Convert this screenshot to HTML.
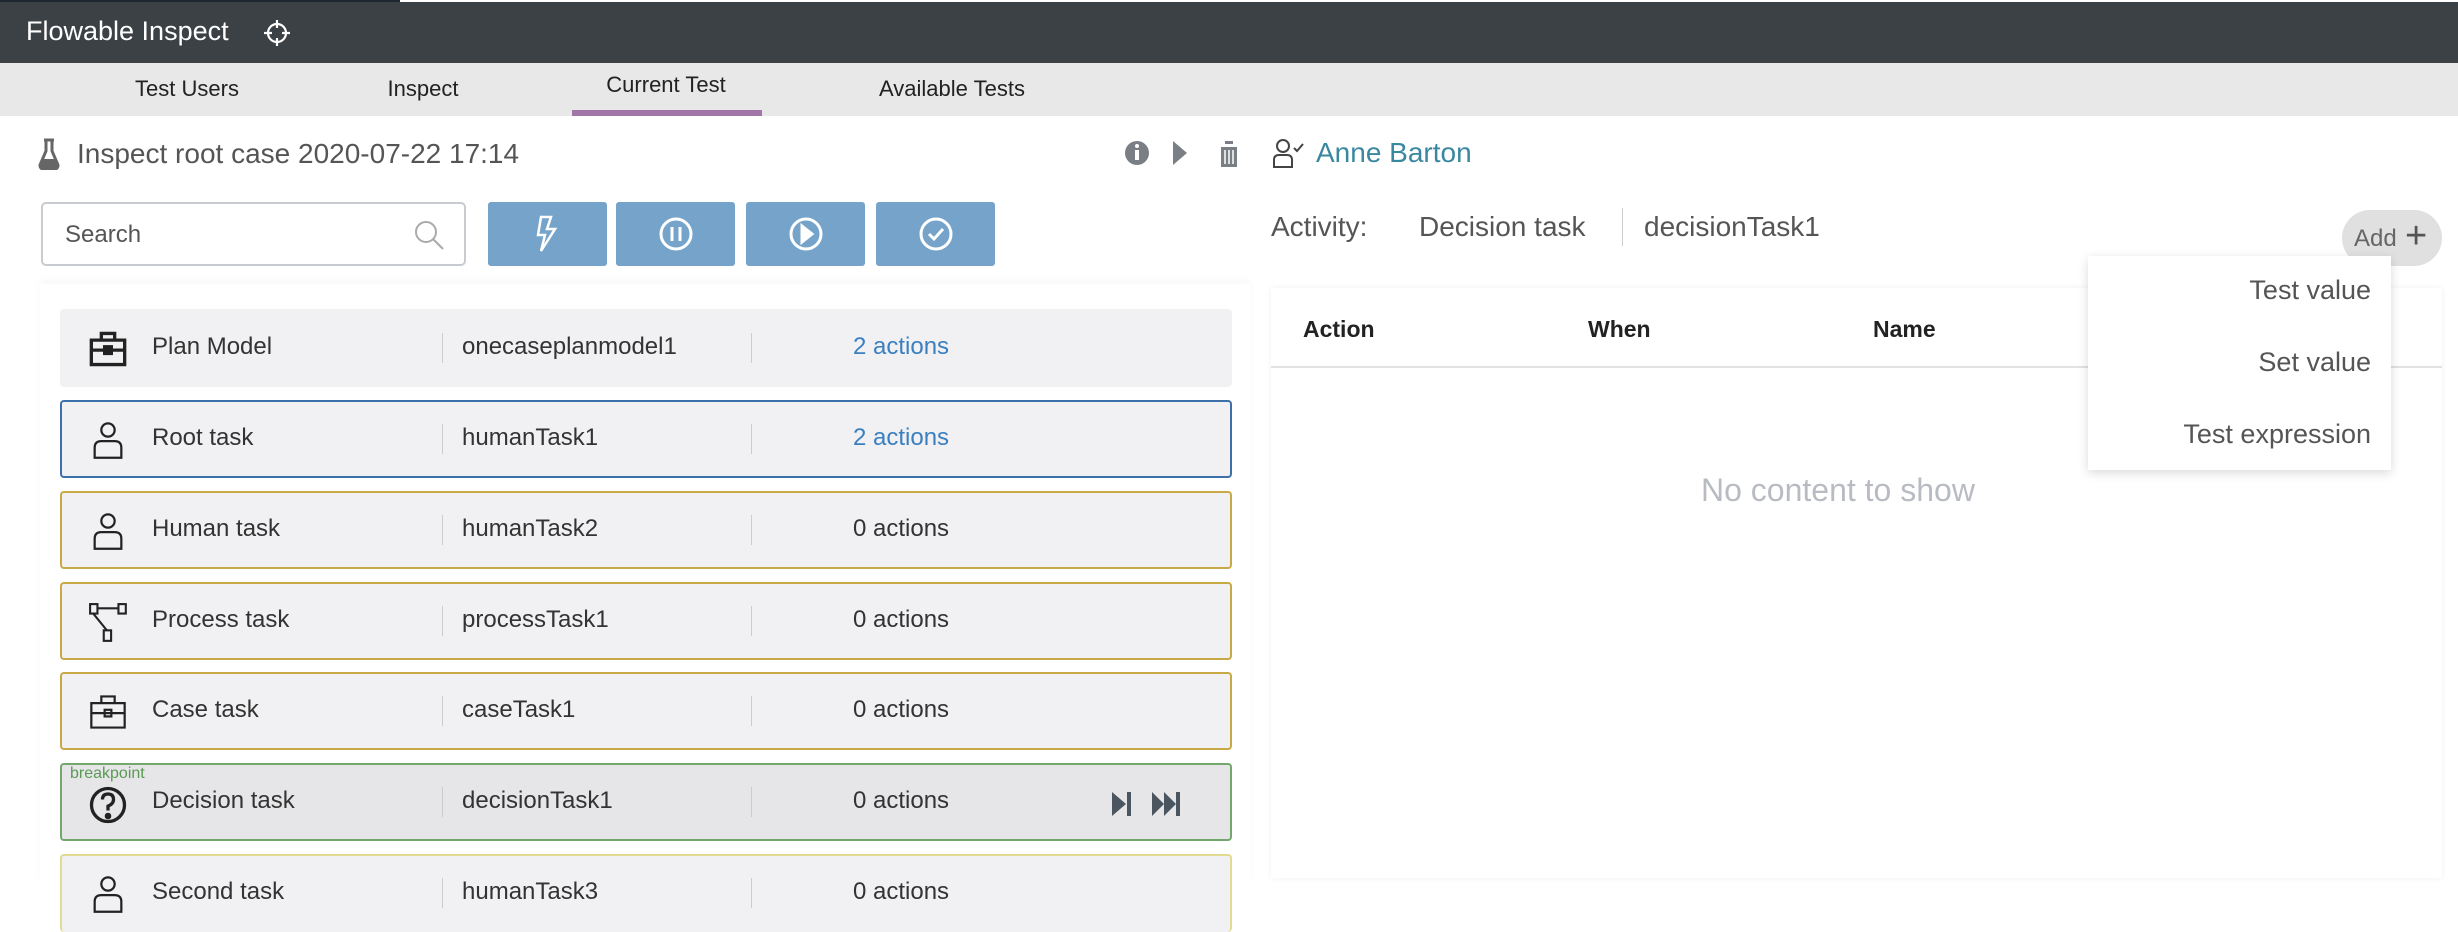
<!DOCTYPE html>
<html><head><meta charset="utf-8"><style>
*{box-sizing:border-box;margin:0;padding:0}
body{width:2458px;height:884px;overflow:hidden;background:#fff;font-family:"Liberation Sans",sans-serif;position:relative;color:#333}
.abs{position:absolute}
.top{left:0;top:0;width:2458px;height:63px;background:#3c4146;border-top:2px solid #fff}
.top:before{content:"";position:absolute;left:0;top:-2px;width:400px;height:2px;background:#1e2730}
.tabs{left:0;top:63px;width:2458px;height:53px;background:#e8e8e8}
.tab{position:absolute;font-size:22px;color:#222;transform:translateX(-50%);white-space:nowrap}
.btn{top:202px;width:119px;height:64px;background:#75a3c9;border-radius:3px}
.btn svg{position:absolute;left:41px;top:13px}
.row{left:60px;width:1172px;height:78px;background:#f1f1f3;border:2px solid transparent;border-radius:4px}
.row .n,.row .i,.row .a{position:absolute;top:22px;font-size:24px;color:#333;white-space:nowrap}
.row .n{left:90px}.row .i{left:400px}.row .a{left:791px}
.row .d{position:absolute;top:22px;width:1px;height:30px;background:#ccc}
.row svg{position:absolute;left:26px;top:18px}
.blue{color:#3a7fc0!important}
.menu div{position:absolute;right:20px;font-size:27px;color:#555;white-space:nowrap}
</style></head><body>
<div class="abs top"><span class="abs" style="left:26px;top:14px;font-size:27px;color:#fff">Flowable Inspect</span>
<svg class="abs" style="left:262px;top:16px" width="30" height="30" viewBox="0 0 30 30" fill="none" stroke="#fff" stroke-width="2.2"><circle cx="15" cy="15" r="9"/><path d="M15 2v8M15 20v8M2 15h8M20 15h8"/></svg></div>
<div class="abs tabs">
<span class="tab" style="left:187px;top:13px">Test Users</span>
<span class="tab" style="left:423px;top:13px">Inspect</span>
<span class="tab" style="left:666px;top:9px">Current Test</span>
<span class="tab" style="left:952px;top:13px">Available Tests</span>
<div class="abs" style="left:572px;top:47px;width:190px;height:6px;background:#a275a8"></div>
</div>
<svg class="abs" style="left:38px;top:138px" width="22" height="32" viewBox="0 0 22 32"><path d="M6 2h10M8 2v11L2 27q0 4 4 4h10q4 0 4-4L14 13V2" fill="none" stroke="#666" stroke-width="3"/><path d="M4 21h14l2 7q0 3-4 3H6q-4 0-4-3z" fill="#666"/></svg>
<span class="abs" style="left:77px;top:138px;font-size:28px;color:#555">Inspect root case 2020-07-22 17:14</span>
<svg class="abs" style="left:1124px;top:139px" width="120" height="30" viewBox="0 0 120 30"><circle cx="13" cy="14" r="12" fill="#7a7f86"/><rect x="11" y="11" width="4" height="10" fill="#fff"/><circle cx="13" cy="7" r="2" fill="#fff"/><path d="M49 2l14 12-14 12z" fill="#7a7f86"/><path d="M95 5h20M101 5V2h8v3M97 8h16v20H97z" fill="#7a7f86"/><path d="M101 11v14M105 11v14M109 11v14" stroke="#fff" stroke-width="1.5"/></svg>
<div class="abs" style="left:41px;top:202px;width:425px;height:64px;border:2px solid #c8ccd0;border-radius:5px"><span class="abs" style="left:22px;top:17px;font-size:24px;color:#555">Search</span>
<svg class="abs" style="left:370px;top:15px" width="34" height="34" viewBox="0 0 34 34" fill="none" stroke="#aaa" stroke-width="2"><circle cx="13" cy="13" r="10"/><path d="M20 20l10 10"/></svg></div>
<div class="abs btn" style="left:488px"><svg width="36" height="38" viewBox="0 0 36 38" fill="none" stroke="#fff" stroke-width="2.5"><path d="M12 2h10l-4 12h8L12 36l4-16H9z"/></svg></div>
<div class="abs btn" style="left:616px"><svg width="38" height="38" viewBox="0 0 38 38" fill="none" stroke="#fff" stroke-width="3"><circle cx="19" cy="19" r="15"/><path d="M15 12v14M23 12v14"/></svg></div>
<div class="abs btn" style="left:746px"><svg width="38" height="38" viewBox="0 0 38 38" fill="none" stroke="#fff" stroke-width="3"><circle cx="19" cy="19" r="15"/><path d="M15 11l10 8-10 8z" fill="#fff"/></svg></div>
<div class="abs btn" style="left:876px"><svg width="38" height="38" viewBox="0 0 38 38" fill="none" stroke="#fff" stroke-width="3"><circle cx="19" cy="19" r="15"/><path d="M12 19l5 5 9-10"/></svg></div>
<div class="abs" style="left:40px;top:284px;width:1210px;height:600px;background:#fff;box-shadow:0 -4px 8px rgba(0,0,0,.03)"></div>

<div class="abs row" style="top:309px"><svg width="40" height="40" viewBox="0 0 36 36" fill="none" stroke="#222" stroke-width="3"><path d="M3 10h30v22H3zM12 10V4h12v6M3 19h30"/><rect x="15" y="16" width="6" height="6" fill="#222"/></svg><span class="n">Plan Model</span><span class="d" style="left:380px"></span><span class="i">onecaseplanmodel1</span><span class="d" style="left:689px"></span><span class="a blue">2 actions</span></div>
<div class="abs row" style="top:400px;border-color:#3d6fa8"><svg width="40" height="40" viewBox="0 0 36 36" fill="none" stroke="#222" stroke-width="2"><circle cx="18" cy="9" r="6"/><path d="M6 34V25q0-6 6-6h12q6 0 6 6v9z"/></svg><span class="n">Root task</span><span class="d" style="left:380px"></span><span class="i">humanTask1</span><span class="d" style="left:689px"></span><span class="a blue">2 actions</span></div>
<div class="abs row" style="top:491px;border-color:#c9a846"><svg width="40" height="40" viewBox="0 0 36 36" fill="none" stroke="#222" stroke-width="2"><circle cx="18" cy="9" r="6"/><path d="M6 34V25q0-6 6-6h12q6 0 6 6v9z"/></svg><span class="n">Human task</span><span class="d" style="left:380px"></span><span class="i">humanTask2</span><span class="d" style="left:689px"></span><span class="a">0 actions</span></div>
<div class="abs row" style="top:582px;border-color:#c9a846"><svg width="42" height="42" viewBox="0 0 40 40" fill="none" stroke="#222" stroke-width="2"><rect x="2" y="2" width="7" height="9"/><rect x="29" y="2" width="7" height="9"/><rect x="15" y="27" width="7" height="10"/><path d="M9 6h20M5 11l13 16"/></svg><span class="n">Process task</span><span class="d" style="left:380px"></span><span class="i">processTask1</span><span class="d" style="left:689px"></span><span class="a">0 actions</span></div>
<div class="abs row" style="top:672px;border-color:#c9a846"><svg width="40" height="40" viewBox="0 0 36 36" fill="none" stroke="#222" stroke-width="2"><path d="M3 10h30v22H3zM12 10V4h12v6M3 19h30"/><rect x="15" y="16" width="6" height="6"/></svg><span class="n">Case task</span><span class="d" style="left:380px"></span><span class="i">caseTask1</span><span class="d" style="left:689px"></span><span class="a">0 actions</span></div>
<div class="abs row" style="top:763px;border-color:#72a86c;background:#e6e6e8"><span class="abs" style="left:8px;top:0;font-size:16px;color:#5a9a55">breakpoint</span><svg width="40" height="44" viewBox="0 0 36 40" fill="none" stroke="#222" stroke-width="3"><circle cx="18" cy="20" r="15"/><path d="M13 15q0-5 5-5t5 5q0 4-5 6v4"/><circle cx="18" cy="30" r="1.5" fill="#222"/></svg><span class="n">Decision task</span><span class="d" style="left:380px"></span><span class="i">decisionTask1</span><span class="d" style="left:689px"></span><span class="a">0 actions</span>
<svg class="abs" style="left:1050px;top:26px" width="90" height="26" viewBox="0 0 90 26" fill="#4a5560"><path d="M0 1l14 12L0 25z"/><rect x="15" y="1" width="4" height="24"/><path d="M40 1l12 12-12 12zM52 1l12 12-12 12z"/><rect x="64" y="1" width="4" height="24"/></svg></div>
<div class="abs row" style="top:854px;border-color:#e2dc92;border-bottom:none"><svg width="40" height="40" viewBox="0 0 36 36" fill="none" stroke="#222" stroke-width="2"><circle cx="18" cy="9" r="6"/><path d="M6 34V25q0-6 6-6h12q6 0 6 6v9z"/></svg><span class="n">Second task</span><span class="d" style="left:380px"></span><span class="i">humanTask3</span><span class="d" style="left:689px"></span><span class="a">0 actions</span></div>

<svg class="abs" style="left:1272px;top:138px" width="34" height="30" viewBox="0 0 34 30" fill="none" stroke="#444" stroke-width="2"><circle cx="11" cy="8" r="6"/><path d="M2 29v-7q0-5 5-5h8q5 0 5 5v7z"/><path d="M22 10l3 3 6-7"/></svg>
<span class="abs" style="left:1316px;top:137px;font-size:28px;color:#3a88a0">Anne Barton</span>
<span class="abs" style="left:1271px;top:211px;font-size:28px;color:#555">Activity:</span>
<span class="abs" style="left:1419px;top:211px;font-size:28px;color:#555">Decision task</span>
<div class="abs" style="left:1622px;top:208px;width:1px;height:38px;background:#ccc"></div>
<span class="abs" style="left:1644px;top:211px;font-size:28px;color:#555">decisionTask1</span>
<div class="abs" style="left:2342px;top:210px;width:100px;height:56px;border-radius:28px;background:#e0e0e0"><span class="abs" style="left:12px;top:15px;font-size:24px;color:#666">Add</span><span class="abs" style="left:63px;top:5px;font-size:38px;color:#555">+</span></div>
<div class="abs" style="left:1271px;top:288px;width:1171px;height:590px;background:#fff;box-shadow:0 0 6px rgba(0,0,0,.06)">
<span class="abs" style="left:32px;top:28px;font-size:23px;font-weight:bold;color:#222">Action</span>
<span class="abs" style="left:317px;top:28px;font-size:23px;font-weight:bold;color:#222">When</span>
<span class="abs" style="left:602px;top:28px;font-size:23px;font-weight:bold;color:#222">Name</span>
<div class="abs" style="left:0;top:78px;width:1171px;height:2px;background:#e2e2e2"></div>
<span class="abs" style="left:430px;top:184px;font-size:32px;color:#b8bcc2">No content to show</span></div>
<div class="abs menu" style="left:2088px;top:256px;width:303px;height:214px;background:#fff;box-shadow:0 3px 10px rgba(0,0,0,.15)">
<div style="top:19px">Test value</div><div style="top:91px">Set value</div><div style="top:163px">Test expression</div></div>
</body></html>
